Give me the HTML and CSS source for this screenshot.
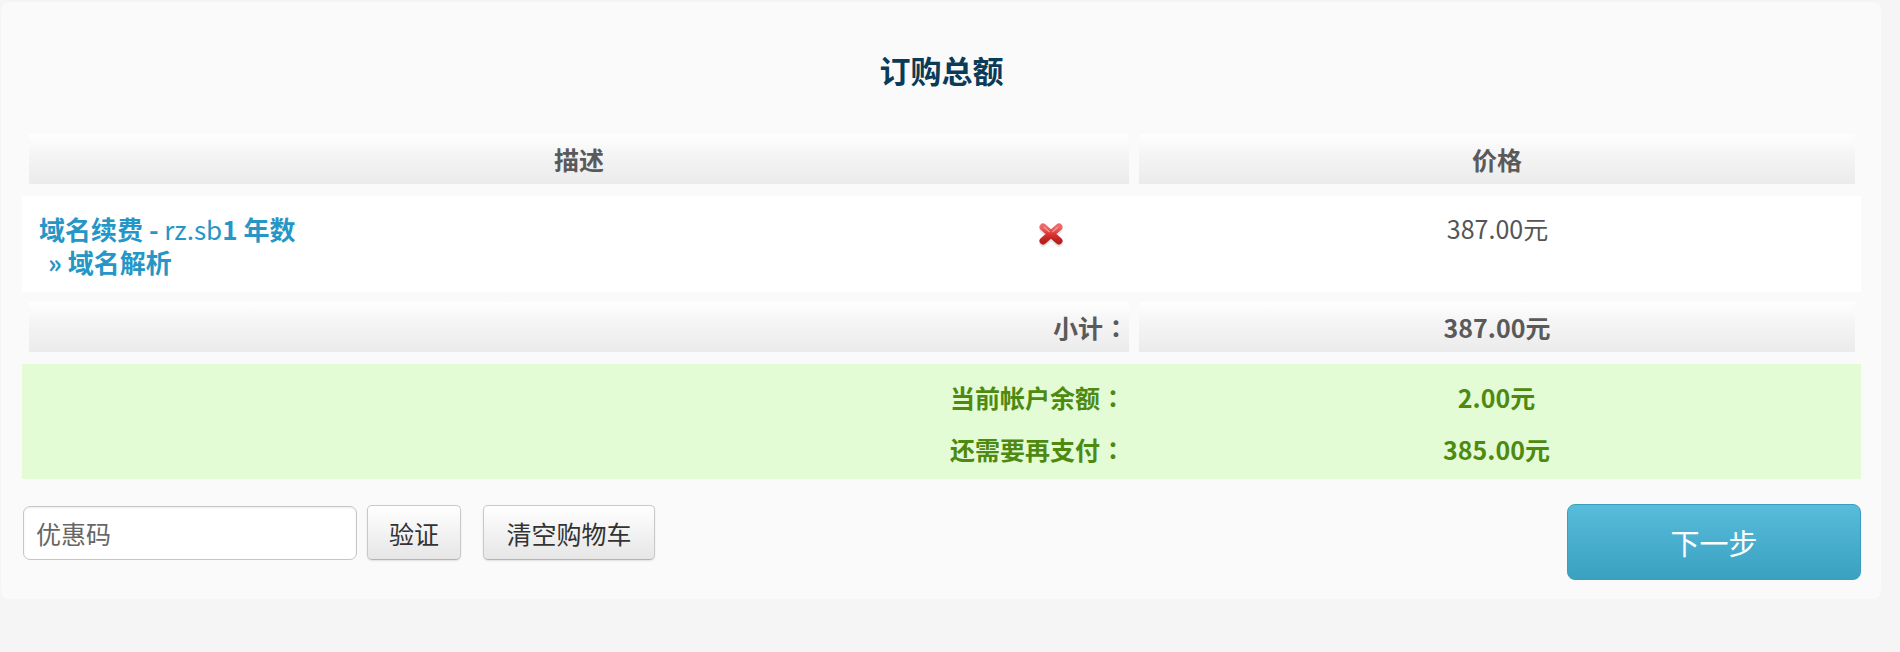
FILE: index.html
```html
<!DOCTYPE html>
<html lang="zh-CN">
<head>
<meta charset="utf-8">
<title>订购总额</title>
<link rel="stylesheet" href="styles.css">
</head>
<body>
<div class="card">
  <h2 class="title">订购总额</h2>

  <div class="bar-row">
    <div class="bar-cell bar-left center">描述</div>
    <div class="bar-cell bar-right">价格</div>
  </div>

  <div class="item-row">
    <div class="item-desc">
      <div class="line"><strong>域名续费 -</strong> rz.sb<strong>1 年数</strong></div>
      <div class="line sub"><strong>» 域名解析</strong></div>
    </div>
    <div class="item-remove">
      <svg width="26" height="26" viewBox="0 0 26 26" aria-label="删除">
        <defs>
          <linearGradient id="xg" x1="0" y1="0" x2="0" y2="1">
            <stop offset="0" stop-color="#ee6a6a"/>
            <stop offset="0.55" stop-color="#d9312f"/>
            <stop offset="1" stop-color="#b82020"/>
          </linearGradient>
        </defs>
        <path d="M5 6 L21 20 M21 6 L5 20" stroke="#d8d8d8" stroke-width="7" stroke-linecap="round" transform="translate(0,1.5)" opacity="0.6"/>
        <path d="M5 5 L21 19 M21 5 L5 19" stroke="url(#xg)" stroke-width="7" stroke-linecap="round"/>
        <path d="M6.5 5.5 L11 9.5 M19.5 5.5 L15 9.5" stroke="#f8a0a0" stroke-width="1.6" stroke-linecap="round" opacity="0.8"/>
      </svg>
    </div>
    <div class="item-price">387.00元</div>
  </div>

  <div class="bar-row subtotal">
    <div class="bar-cell bar-left right">小计<span class="colon">：</span></div>
    <div class="bar-cell bar-right">387.00元</div>
  </div>

  <div class="balance">
    <div class="bal-row">
      <div class="bal-label">当前帐户余额<span class="colon">：</span></div>
      <div class="bal-value">2.00元</div>
    </div>
    <div class="bal-row">
      <div class="bal-label">还需要再支付<span class="colon">：</span></div>
      <div class="bal-value">385.00元</div>
    </div>
  </div>

  <div class="actions">
    <input class="promo" type="text" placeholder="优惠码">
    <button class="btn btn-verify" type="button">验证</button>
    <button class="btn btn-clear" type="button">清空购物车</button>
    <button class="btn-next" type="button">下一步</button>
  </div>
</div>
</body>
</html>
```

FILE: styles.css
```css
html, body {
  margin: 0;
  padding: 0;
}
body {
  background: #f5f5f5;
  font-family: "Noto Sans CJK SC", "Noto Sans", sans-serif;
  color: #555;
  width: 1900px;
  height: 652px;
  overflow: hidden;
}
.card {
  margin: 2px 0 0 1px;
  width: 1880px;
  height: 597px;
  box-sizing: border-box;
  background: #fafafa;
  border-radius: 8px;
  padding: 48px 20px 0 21px;
}
.title {
  margin: 0;
  height: 40px;
  line-height: 40px;
  font-size: 31px;
  font-weight: 700;
  text-align: center;
  color: #0a3b58;
  margin-bottom: 44px;
}
.bar-row {
  display: flex;
  gap: 10px;
  padding: 0 6px 0 7px;
  height: 50px;
}
.bar-cell {
  height: 50px;
  line-height: 50px;
  font-size: 25px;
  font-weight: 700;
  color: #5a5a5a;
  background: linear-gradient(#fefefe, #f4f4f4 45%, #ebebeb);
  box-sizing: border-box;
}
.bar-left {
  width: 1100px;
}
.bar-right {
  width: 716px;
  text-align: center;
}
.center { text-align: center; }
.right { text-align: right; padding-right: 0; }

.colon {
  font-family: "Noto Sans CJK TC", "Noto Sans CJK SC", sans-serif;
  display: inline-block;
  width: 26px;
  text-align: center;
}

.item-row {
  margin-top: 12px;
  height: 96px;
  background: #fff;
  display: grid;
  grid-template-columns: 946px 166px 1fr;
  box-sizing: border-box;
  padding-top: 16px;
}
.item-desc {
  padding-left: 17px;
  font-size: 26px;
  line-height: 33px;
  color: #2596c6;
}
.item-desc strong {
  font-weight: 700;
}
.item-desc .sub {
  padding-left: 9px;
}
.item-remove {
  display: flex;
  justify-content: center;
  align-items: flex-start;
  padding-top: 10px;
}
.item-price {
  text-align: center;
  font-size: 25px;
  line-height: 33px;
  color: #555;
}

.subtotal {
  margin-top: 10px;
}

.balance {
  margin-top: 12px;
  height: 115px;
  box-sizing: border-box;
  background: #e3fcd5;
  padding-top: 7px;
  color: #4f8a10;
  font-weight: 700;
  font-size: 25px;
}
.bal-row {
  display: grid;
  grid-template-columns: 1104px 1fr;
  height: 52px;
  line-height: 52px;
}
.bal-label {
  text-align: right;
}
.bal-value {
  text-align: center;
  padding-left: 6px;
}

.actions {
  margin-top: 26px;
  display: flex;
  align-items: flex-start;
}
.promo {
  margin-top: 1px;
  width: 334px;
  height: 54px;
  box-sizing: border-box;
  border: 1px solid #c6c6c6;
  border-radius: 7px;
  background: #fff;
  box-shadow: inset 0 1px 2px rgba(0,0,0,0.08);
  font-family: "Noto Sans CJK SC", sans-serif;
  font-size: 25px;
  padding: 0 12px;
  color: #555;
  margin-left: 1px;
}
.promo::placeholder {
  color: #666;
}
.btn {
  height: 55px;
  box-sizing: border-box;
  border: 1px solid #c8c8c8;
  border-bottom-color: #b3b3b3;
  border-radius: 5px;
  background: linear-gradient(#ffffff, #e6e6e6);
  box-shadow: 0 1px 2px rgba(0,0,0,0.1);
  font-family: "Noto Sans CJK SC", sans-serif;
  font-size: 25px;
  color: #333;
  padding: 0;
}
.btn-verify {
  margin-left: 10px;
  width: 94px;
}
.btn-clear {
  margin-left: 22px;
  width: 172px;
}
.btn-next {
  margin-left: auto;
  margin-top: -1px;
  width: 294px;
  height: 76px;
  box-sizing: border-box;
  border: 1px solid #3a9fbf;
  border-radius: 8px;
  background: linear-gradient(#58bcdb, #3aa1c1);
  color: #fff;
  font-family: "Noto Sans CJK SC", sans-serif;
  font-size: 29px;
  padding: 0;
}
```
